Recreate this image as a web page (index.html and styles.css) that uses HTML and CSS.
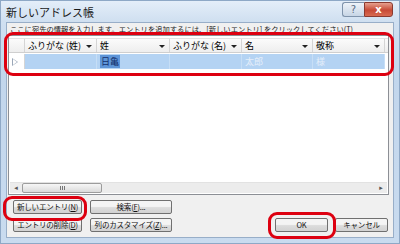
FILE: index.html
```html
<!DOCTYPE html>
<html lang="ja">
<head>
    <meta charset="UTF-8">
    <title>新しいアドレス帳</title>
    <link rel="stylesheet" href="styles.css">
</head>
<body>
    <div class="window">
        <div class="titlebar">
            <span class="title">新しいアドレス帳</span>
            <div class="controls">
                <span class="btn-help">?</span>
                <span class="btn-close">x</span>
            </div>
        </div>
        <div class="client">
            <p class="hint">ここに宛先の情報を入力します。エントリを追加するには、[新しいエントリ] をクリックしてください(T)</p>
            <div class="grid">
                <div class="row head">
                    <div class="sel"></div>
                    <div class="cell c1">ふりがな (姓)<i class="drop"></i></div>
                    <div class="cell c2">姓<i class="drop"></i></div>
                    <div class="cell c3">ふりがな (名)<i class="drop"></i></div>
                    <div class="cell c4">名<i class="drop"></i></div>
                    <div class="cell c5">敬称<i class="drop"></i></div>
                </div>
                <div class="row data">
                    <div class="sel"><span class="arrow"></span></div>
                    <div class="cell c1"></div>
                    <div class="cell c2"><span class="mark">日亀</span></div>
                    <div class="cell c3"></div>
                    <div class="cell c4 ghost">太郎</div>
                    <div class="cell c5 ghost">様</div>
                </div>
                <div class="fill"></div>
                <div class="hscroll">
                    <span class="sarrow">&#9666;</span>
                    <span class="thumb"><span class="grip"></span></span>
                    <span class="track"></span>
                    <span class="sarrow">&#9656;</span>
                </div>
            </div>
            <div class="actions">
                <div class="left">
                    <button class="btn wide">新しいエントリ(<u>N</u>)</button>
                    <button class="btn wider">検索(<u>F</u>)...</button>
                    <button class="btn wide">エントリの削除(<u>D</u>)</button>
                    <button class="btn wider">列のカスタマイズ(<u>Z</u>)...</button>
                </div>
                <div class="right">
                    <button class="btn small">OK</button>
                    <button class="btn small">キャンセル</button>
                </div>
            </div>
            <div class="mark-red grid-mark"></div>
            <div class="mark-red new-mark"></div>
            <div class="mark-red ok-mark"></div>
        </div>
    </div>
</body>
</html>
```

FILE: styles.css
```css
body {
    margin: 0;
    padding: 0;
    font-family: "Noto Sans CJK JP", "DejaVu Sans", sans-serif;
    color: #000;
}
.window {
    width: 400px;
    height: 244px;
    box-sizing: border-box;
    background: linear-gradient(#d6e4f3, #c2d6ec 30%, #c9dbef);
    border: 1px solid #8ea8c6;
    display: flex;
    flex-direction: column;
}
.titlebar {
    height: 21px;
    display: flex;
    align-items: center;
    padding: 0 5px;
    background: linear-gradient(#e4eef9, #cfdff0);
}
.title {
    font-size: 11px;
    color: #1a1a1a;
}
.controls {
    margin-left: auto;
    display: flex;
    align-self: flex-start;
    margin-top: 1px;
    margin-right: 1px;
}
.btn-help, .btn-close {
    height: 15px;
    line-height: 14px;
    text-align: center;
    font-size: 10px;
    font-family: "DejaVu Sans", sans-serif;
    border: 1px solid #7f93ab;
    box-sizing: border-box;
}
.btn-help {
    width: 22px;
    color: #5a6c84;
    background: linear-gradient(#eef3f9, #c7d5e5);
    border-radius: 3px 0 0 3px;
    border-right: none;
}
.btn-close {
    width: 29px;
    color: #fff;
    font-weight: bold;
    background: linear-gradient(#e6a08e, #c74a36 55%, #d86a50);
    border-color: #8a3a30;
    border-radius: 0 3px 3px 0;
}
.client {
    position: relative;
    flex: 1;
    margin: 0 5px 5px 5px;
    background: #f0f0f0;
    border: 1px solid #98aec8;
    display: flex;
    flex-direction: column;
}
.hint {
    margin: 0;
    padding: 2px 0 0 3px;
    height: 9px;
    font-size: 7.3px;
    line-height: 9px;
    color: #222;
    white-space: nowrap;
}
.grid {
    margin: 1px 4px 0 1px;
    height: 160px;
    background: #fff;
    border: 1px solid #8c8f95;
    display: flex;
    flex-direction: column;
    padding-top: 2px;
    box-sizing: border-box;
}
.row {
    display: flex;
    flex: none;
}
.head {
    height: 13px;
    background: linear-gradient(#fbfbfb, #eeeeee);
    border-bottom: 1px solid #cfcfcf;
    border-top: 1px solid #e2e2e2;
}
.sel {
    width: 16px;
    flex: none;
    border-right: 1px solid #d5d5d5;
    box-sizing: border-box;
    display: flex;
    align-items: center;
    padding-left: 3px;
}
.cell {
    position: relative;
    box-sizing: border-box;
    border-right: 1px solid #d5d5d5;
    font-size: 9px;
    line-height: 13px;
    padding-left: 3px;
    white-space: nowrap;
}
.c1 { width: 72px; }
.c2 { width: 73px; }
.c3 { width: 72px; }
.c4 { width: 71px; }
.c5 { width: 72px; }
.drop {
    position: absolute;
    right: 4px;
    top: 6px;
    width: 0;
    height: 0;
    border-left: 3px solid transparent;
    border-right: 3px solid transparent;
    border-top: 3px solid #222;
}
.data {
    height: 15px;
    margin-top: 1px;
}
.data .cell {
    background: #b4d3f3;
    border-right-color: #c6def6;
    line-height: 15px;
}
.arrow {
    width: 0;
    height: 0;
    border-top: 4px solid transparent;
    border-bottom: 4px solid transparent;
    border-left: 6px solid #9aa7b8;
    position: relative;
}
.arrow::after {
    content: "";
    position: absolute;
    left: -5px;
    top: -3px;
    border-top: 3px solid transparent;
    border-bottom: 3px solid transparent;
    border-left: 4px solid #fff;
}
.mark {
    background: #5e95d8;
    color: #14306b;
    padding: 0 1px;
}
.ghost {
    color: #e4eefa;
}
.fill {
    flex: 1;
}
.hscroll {
    height: 10px;
    margin: 0 1px 1px 1px;
    display: flex;
    align-items: center;
    background: #ececec;
    border-top: 1px solid #e2e2e2;
}
.sarrow {
    width: 12px;
    text-align: center;
    font-size: 7px;
    color: #555;
    font-family: "DejaVu Sans", sans-serif;
}
.thumb {
    width: 78px;
    height: 8px;
    border: 1px solid #9c9c9c;
    border-radius: 2px;
    background: linear-gradient(#f6f6f6, #dadada);
    display: flex;
    justify-content: center;
    align-items: center;
}
.grip {
    width: 5px;
    height: 4px;
    background: repeating-linear-gradient(90deg, #777 0 1px, transparent 1px 2px);
}
.track {
    flex: 1;
}
.actions {
    display: flex;
    justify-content: space-between;
    align-items: flex-end;
    padding: 5px 5px 0 6px;
}
.left {
    display: grid;
    grid-template-columns: 69px 82px;
    column-gap: 8px;
    row-gap: 4px;
}
.right {
    display: flex;
    gap: 7px;
}
.btn {
    height: 14px;
    padding: 0;
    font-family: "Noto Sans CJK JP", "DejaVu Sans", sans-serif;
    font-size: 7.5px;
    line-height: 12px;
    letter-spacing: -0.2px;
    color: #111;
    border: 1px solid #707070;
    border-radius: 2px;
    background: linear-gradient(#f4f4f4 45%, #dcdcdc 55%, #d2d2d2);
    white-space: nowrap;
}
.btn.wide { width: 69px; }
.btn.wider { width: 82px; }
.btn.small { width: 53px; }
.mark-red {
    position: absolute;
    border: 3px solid #dd0010;
    border-radius: 9px;
    box-sizing: border-box;
}
.grid-mark {
    left: -3px;
    top: 9px;
    width: 390px;
    height: 44px;
}
.new-mark {
    left: -4px;
    top: 173px;
    width: 84px;
    height: 25px;
}
.ok-mark {
    left: 261px;
    top: 189px;
    width: 68px;
    height: 27px;
}
```
